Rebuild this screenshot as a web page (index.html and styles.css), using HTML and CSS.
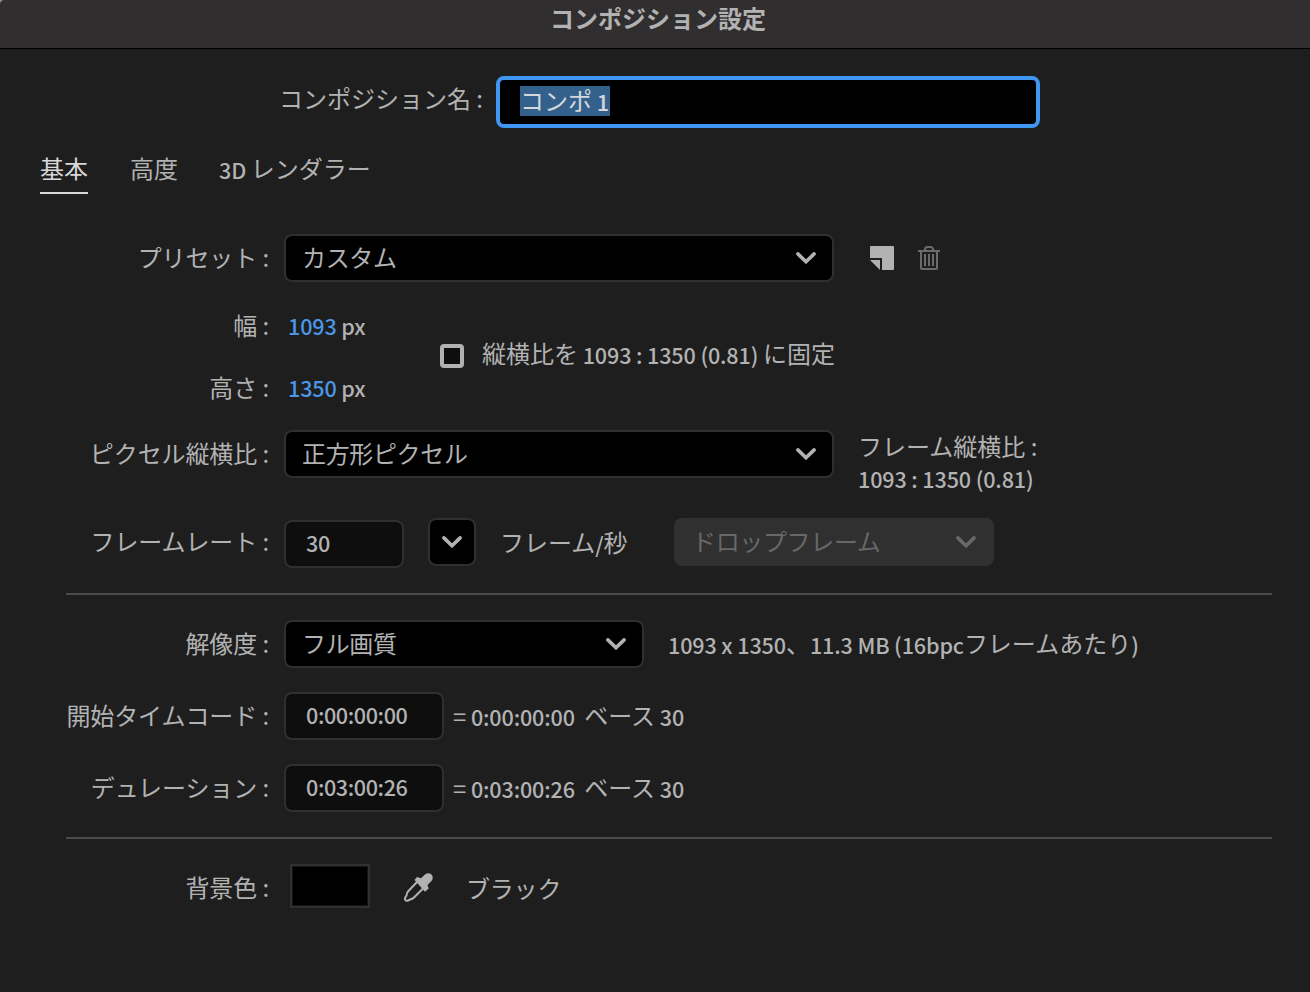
FILE: index.html
```html
<!DOCTYPE html>
<html lang="ja">

<head>
    <meta charset="UTF-8">
    <meta name="viewport" content="width=device-width, initial-scale=1.0">
    <title>コンポジション設定</title>
    <link rel="stylesheet" href="styles.css">
</head>

<body>
    <svg width="0" height="0" class="sprite">
        <symbol id="chevron" viewBox="0 0 20 12">
            <path d="M1.9 1.9 10 9.7l8.1-7.8" fill="none" stroke="currentColor" stroke-width="3.6" stroke-linecap="round" />
        </symbol>
    </svg>
    <div class="dialog">
        <header class="titlebar">コンポジション設定</header>

        <div class="name-row">
            <label class="name-label">コンポジション名 :</label>
            <div class="name-input"><span class="selected">コンポ<span class="latin"> 1</span></span></div>
        </div>

        <nav class="tabs">
            <a class="tab active">基本</a>
            <a class="tab">高度</a>
            <a class="tab"><span class="latin">3D </span>レンダラー</a>
        </nav>

        <div class="row preset">
            <label class="label">プリセット :</label>
            <div class="select wide">カスタム<svg class="chevron"><use href="#chevron" /></svg></div>
            <svg class="save-icon" width="24" height="24" viewBox="0 0 24 24">
                <path d="M1 0h22a1 1 0 0 1 1 1v22a1 1 0 0 1-1 1H12V12H0V1a1 1 0 0 1 1-1z" />
                <path d="M0 14h10v10z" />
            </svg>
            <svg class="trash-icon" width="22" height="24" viewBox="0 0 22 24">
                <path d="M0 5h22M7 5V3.500Q7 1 9.500 1h3Q15 1 15 3.500V5M3 5v17q0 1 1 1h14q1 0 1-1V5M7 8v12M11 8v12M15 8v12" fill="none" stroke="currentColor" stroke-width="2" />
            </svg>
        </div>

        <div class="size">
            <div class="size-fields">
                <div class="row">
                    <label class="label">幅 :</label>
                    <div class="value latin"><span class="link">1093</span> px</div>
                </div>
                <div class="row">
                    <label class="label">高さ :</label>
                    <div class="value latin"><span class="link">1350</span> px</div>
                </div>
            </div>
            <span class="checkbox"></span>
            <div class="lock-text">縦横比を<span class="latin"> 1093 : 1350 (0.81) </span>に固定</div>
        </div>

        <div class="row pixel">
            <label class="label">ピクセル縦横比 :</label>
            <div class="select wide">正方形ピクセル<svg class="chevron"><use href="#chevron" /></svg></div>
            <div class="frame-aspect">
                <div>フレーム縦横比 :</div>
                <div class="latin">1093 : 1350 (0.81)</div>
            </div>
        </div>

        <div class="row rate">
            <label class="label">フレームレート :</label>
            <div class="input latin rate-input">30</div>
            <div class="select rate-menu"><svg class="chevron"><use href="#chevron" /></svg></div>
            <div class="rate-unit">フレーム<span class="latin">/</span>秒</div>
            <div class="select disabled">ドロップフレーム<svg class="chevron"><use href="#chevron" /></svg></div>
        </div>

        <hr>

        <div class="row resolution">
            <label class="label">解像度 :</label>
            <div class="select medium">フル画質<svg class="chevron"><use href="#chevron" /></svg></div>
            <div class="res-info"><span class="latin">1093 x 1350</span>、<span class="latin">11.3 MB (16bpc</span>フレームあたり<span class="latin">)</span></div>
        </div>

        <div class="row timecode">
            <label class="label">開始タイムコード :</label>
            <div class="input latin">0:00:00:00</div>
            <div class="base"><span class="latin"><span class="equal">=</span> 0:00:00:00&nbsp; </span>ベース<span class="latin"> 30</span></div>
        </div>

        <div class="row timecode">
            <label class="label">デュレーション :</label>
            <div class="input latin">0:03:00:26</div>
            <div class="base"><span class="latin"><span class="equal">=</span> 0:03:00:26&nbsp; </span>ベース<span class="latin"> 30</span></div>
        </div>

        <hr>

        <div class="row background">
            <label class="label">背景色 :</label>
            <div class="swatch"></div>
            <svg class="dropper-icon" width="30" height="30" viewBox="0 0 30 30">
                <path d="M14 9 5 18.500Q3.500 20.500 3.500 22.500L2 25Q1.500 28 4.500 27.800L7 26.500Q9.500 26 11 24.500L20.500 15" fill="none" stroke="currentColor" stroke-width="2" stroke-linejoin="round" />
                <path d="M11.500 7 14 4l4 1.300L22 1.500Q25.500-.8 28.500 1.500 31 4.500 28.500 8L24.500 12l1.200 3.500-3.700 3.300z" />
            </svg>
            <div class="color-name">ブラック</div>
        </div>
    </div>
</body>

</html>
```

FILE: styles.css
```css
body {
    margin: 0;
    background: #8b8b8b;
    font-family: "Noto Sans CJK JP", "Noto Sans", sans-serif;
    font-size: 24px;
    line-height: 32px;
    color: #b2b2b2;
    white-space: nowrap;
}

.sprite {
    display: block;
}

.dialog {
    box-sizing: border-box;
    height: 992px;
    overflow: hidden;
    background: #1e1e1e;
    border-top-left-radius: 5px;
}

.latin {
    font-size: 21.6px;
    font-weight: 500;
    letter-spacing: -0.15px;
    white-space: pre;
}

span.latin {
    line-height: 1;
    vertical-align: -1px;
}

.titlebar {
    box-sizing: border-box;
    height: 49px;
    padding: 2px 0 0 6px;
    background: #312e30;
    border-bottom: 1px solid #000;
    text-align: center;
    font-weight: 700;
}

/* composition name */
.name-row {
    display: flex;
    margin-top: 27px;
}

.name-label {
    width: 483px;
    padding-top: 6px;
    margin-right: 13px;
    text-align: right;
}

.name-input {
    box-sizing: border-box;
    width: 544px;
    height: 52px;
    padding: 6px 20px;
    background: #000;
    border: 4px solid #4096f3;
    border-radius: 8px;
}

.selected {
    display: block;
    width: 90px;
    height: 30px;
    line-height: 27px;
    background: #33618c;
    color: #d5d8dc;
}

/* tabs */
.tabs {
    display: flex;
    gap: 41px;
    margin: 24px 0 0 40px;
}

.tab {
    height: 40px;
    border-bottom: 2px solid transparent;
}

.tab.active {
    margin-right: 1px;
    color: #d8d8d8;
    border-bottom-color: #d8d8d8;
}

/* form rows */
.row {
    display: flex;
    align-items: center;
    height: 48px;
}

.label {
    width: 269px;
    padding-bottom: 2px;
    margin-right: 15px;
    text-align: right;
    letter-spacing: -0.1px;
}

.select,
.input {
    box-sizing: border-box;
    height: 48px;
    border: 2px solid #2f2f2f;
    border-radius: 8px;
}

.select {
    display: flex;
    align-items: center;
    justify-content: space-between;
    padding: 0 16px 2px;
    background: #000;
    letter-spacing: -0.35px;
}

.wide {
    width: 550px;
}

.medium {
    width: 360px;
}

.chevron {
    width: 20px;
    height: 12px;
    margin-top: 2px;
}

.input {
    width: 160px;
    padding: 5px 20px;
    background: #0e0e0e;
    letter-spacing: -0.4px;
}

.preset {
    margin-top: 40px;
}

.save-icon {
    margin-left: 36px;
    fill: #b2b2b2;
}

.trash-icon {
    margin-left: 24px;
    color: #6b6b6b;
}

.size {
    display: flex;
    align-items: center;
    height: 124px;
    margin-top: 12px;
}

.size-fields {
    width: 440px;
}

.size-fields .row {
    height: 62px;
}

.size-fields .label {
    padding-bottom: 0;
}

.value {
    padding-top: 2px;
    margin-left: 4px;
}

.link {
    color: #4b96e6;
}

.checkbox {
    box-sizing: border-box;
    width: 24px;
    height: 24px;
    margin-right: 18px;
    border: 4px solid #b2b2b2;
    border-radius: 4px;
    background: #0e0e0e;
}

.lock-text {
    padding-bottom: 6px;
}

.pixel {
    margin-top: 12px;
}

.frame-aspect {
    margin: 16px 0 0 24px;
    line-height: 33px;
}

.rate {
    margin-top: 40px;
}

.rate-input {
    width: 120px;
    margin-top: 4px;
}

.rate-menu {
    width: 48px;
    padding: 0 12px 2px;
    margin-left: 24px;
}

.rate-unit {
    width: 174px;
    margin-left: 24px;
}

.disabled {
    width: 320px;
    background: #303030;
    border-color: #303030;
    color: #686868;
}

hr {
    height: 2px;
    margin: 27px 38px 25px 66px;
    border: none;
    background: #4b4b4b;
}

.timecode + hr {
    margin-top: 25px;
}

.res-info {
    padding-bottom: 2px;
    margin-left: 24px;
}

.timecode {
    margin-top: 24px;
}

.base {
    padding-bottom: 2px;
    margin-left: 9px;
}

.equal {
    font-size: 24px;
    font-weight: 400;
}

/* background color */
.swatch {
    box-sizing: border-box;
    width: 80px;
    height: 44px;
    margin: -4px 0 0 6px;
    background: #000;
    border: 2px solid #303030;
    box-shadow: inset 0 0 0 1px #151515;
}

.dropper-icon {
    margin-left: 33px;
    color: #b2b2b2;
    fill: currentColor;
}

.color-name {
    margin-left: 33px;
    letter-spacing: -0.2px;
}
```
